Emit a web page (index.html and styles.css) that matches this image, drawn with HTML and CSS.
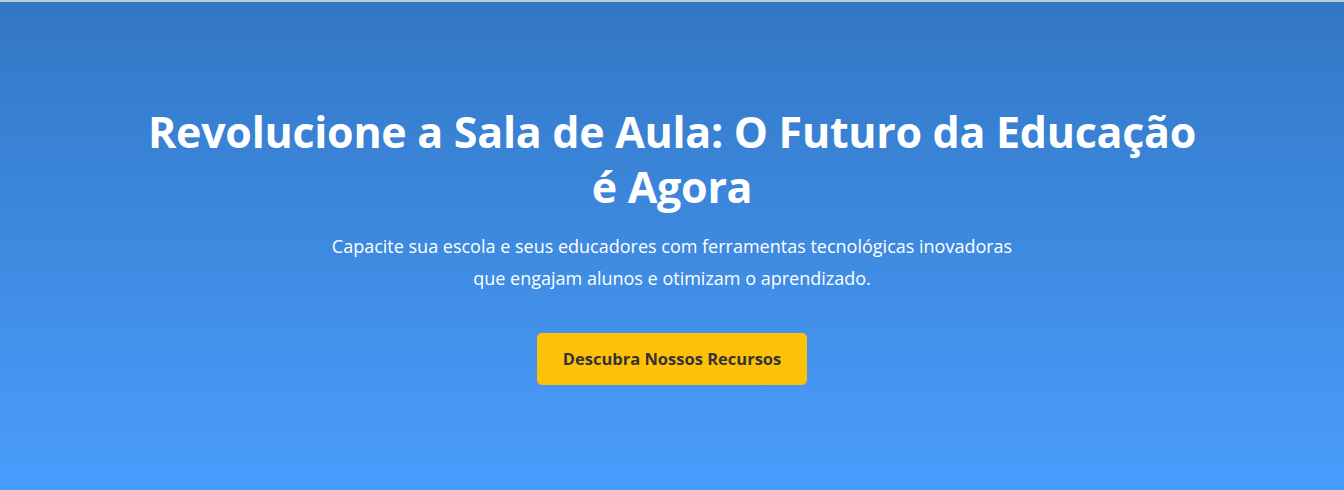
FILE: index.html
```html
<!DOCTYPE html>
<html lang="pt-BR">
<head>
<meta charset="utf-8">
<title>Revolucione a Sala de Aula</title>
<link rel="stylesheet" href="styles.css">
</head>
<body>
<section class="hero">
  <div class="hero-inner">
    <h1 class="hero-title">Revolucione a Sala de Aula: O Futuro da Educação é Agora</h1>
    <p class="hero-text">Capacite sua escola e seus educadores com ferramentas tecnológicas inovadoras que engajam alunos e otimizam o aprendizado.</p>
    <a class="hero-btn" href="#recursos">Descubra Nossos Recursos</a>
  </div>
</section>
</body>
</html>
```

FILE: styles.css
```css
html, body {
  margin: 0;
  padding: 0;
}
body {
  font-family: "Open Sans", "Noto Sans", sans-serif;
  background: #4a9cfc;
  border-top: 2px solid #bcc8dc;
  min-height: 488px;
  display: flex;
  flex-direction: column;
}
.hero {
  flex: 1;
  background: linear-gradient(180deg, #3277c4 0%, #4a9dfd 100%);
  color: #fff;
  text-align: center;
  display: flex;
  justify-content: center;
  padding: 102px 20px 0;
}
.hero-inner {
  max-width: 1100px;
  display: flex;
  flex-direction: column;
  align-items: center;
}
.hero-title {
  margin: 0;
  max-width: 1060px;
  font-size: 43px;
  font-weight: 700;
  line-height: 55px;
  letter-spacing: -0.3px;
}
.hero-text {
  margin: 16px 0 0;
  max-width: 700px;
  font-size: 18px;
  line-height: 32px;
}
.hero-btn {
  margin-top: 39px;
  display: inline-block;
  background: #ffc107;
  color: #333;
  font-weight: 700;
  font-size: 16.5px;
  text-decoration: none;
  padding: 14px 26px 14px 26px;
  border-radius: 5px;
  line-height: 24px;
}
```
